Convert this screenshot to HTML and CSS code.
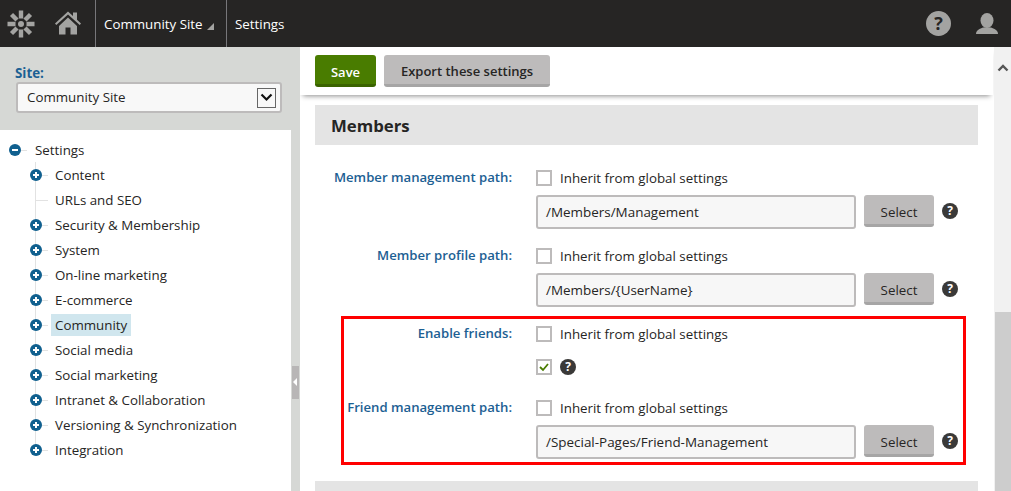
FILE: index.html
```html
<!DOCTYPE html>
<html lang="en">
<head>
    <meta charset="UTF-8">
    <title>Settings</title>
    <link rel="stylesheet" href="styles.css">
</head>
<body>
    <header class="topbar">
        <a class="logo">
            <svg width="28" height="28" viewBox="0 0 28 28">
                <g stroke="#a3a3a1" stroke-width="4.400">
                    <path d="M14 0.500v8M14 19.500v8M0.500 14h8M19.500 14h8M4.500 4.500l5.500 5.500M18 18l5.500 5.500M23.500 4.500L18 10M10 18l-5.500 5.500"/>
                </g>
                <circle cx="14" cy="14" r="3" fill="#a3a3a1"/>
            </svg>
        </a>
        <a class="home">
            <svg width="26" height="25" viewBox="0 0 26 25">
                <path d="M0 12.500L13 0.500l5 4.600V1.500h4v7.300l4 3.700-1.300 1.500L13 3.500 1.300 14z" fill="#a3a3a1"/>
                <path d="M4 15L13 6.500l9 8.500v8.500h-6.500v-7h-5v7H4z" fill="#a3a3a1"/>
            </svg>
        </a>
        <div class="crumb">Community Site <span class="crumb-arrow"></span></div>
        <div class="crumb crumb-last">Settings</div>
        <div class="topbar-right">
            <span class="top-help">?</span>
            <svg width="24" height="24" viewBox="0 0 24 24">
                <ellipse cx="12" cy="8.500" rx="6.500" ry="7.500" fill="#a3a3a1"/>
                <path d="M1 22c0-4 4-5.500 7-6.500h8c3 1 7 2.500 7 6.500z" fill="#a3a3a1"/>
            </svg>
        </div>
    </header>

    <div class="layout">
        <aside class="sidebar">
            <div class="site-box">
                <div class="site-label">Site:</div>
                <div class="site-select">
                    <span class="site-value">Community Site</span>
                    <span class="select-arrow">
                        <svg width="13" height="9" viewBox="0 0 13 9"><path d="M1.500 1.500l5 5 5-5" fill="none" stroke="#111" stroke-width="2.200"/></svg>
                    </span>
                </div>
            </div>
            <ul class="tree">
                <li class="tree-root"><span class="node minus"></span><span class="tree-text">Settings</span></li>
                <li class="tree-children">
                    <ul>
                        <li><span class="node plus"></span><span class="tree-text">Content</span></li>
                        <li><span class="node none"></span><span class="tree-text">URLs and SEO</span></li>
                        <li><span class="node plus"></span><span class="tree-text">Security &amp; Membership</span></li>
                        <li><span class="node plus"></span><span class="tree-text">System</span></li>
                        <li><span class="node plus"></span><span class="tree-text">On-line marketing</span></li>
                        <li><span class="node plus"></span><span class="tree-text">E-commerce</span></li>
                        <li><span class="node plus"></span><span class="tree-text selected">Community</span></li>
                        <li><span class="node plus"></span><span class="tree-text">Social media</span></li>
                        <li><span class="node plus"></span><span class="tree-text">Social marketing</span></li>
                        <li><span class="node plus"></span><span class="tree-text">Intranet &amp; Collaboration</span></li>
                        <li><span class="node plus"></span><span class="tree-text">Versioning &amp; Synchronization</span></li>
                        <li><span class="node plus"></span><span class="tree-text">Integration</span></li>
                    </ul>
                </li>
            </ul>
        </aside>

        <div class="splitter"><span class="splitter-handle"></span></div>

        <main class="main">
            <div class="toolbar">
                <button class="btn btn-save">Save</button>
                <button class="btn btn-export">Export these settings</button>
            </div>
            <div class="content">
                <h2 class="section-head">Members</h2>

                <div class="fields">
                    <div class="field-label">Member management path:</div>
                    <div class="field-body">
                        <label class="inherit"><span class="check"></span>Inherit from global settings</label>
                        <div class="path-row">
                            <div class="path-input">/Members/Management</div>
                            <button class="btn btn-select">Select</button>
                            <span class="help">?</span>
                        </div>
                    </div>

                    <div class="field-label">Member profile path:</div>
                    <div class="field-body">
                        <label class="inherit"><span class="check"></span>Inherit from global settings</label>
                        <div class="path-row">
                            <div class="path-input">/Members/{UserName}</div>
                            <button class="btn btn-select">Select</button>
                            <span class="help">?</span>
                        </div>
                    </div>

                    <div class="field-label">Enable friends:</div>
                    <div class="field-body field-body-check">
                        <label class="inherit"><span class="check"></span>Inherit from global settings</label>
                        <div class="value-row">
                            <span class="check">
                                <svg width="12" height="12" viewBox="0 0 12 12"><path d="M2 6l3 3 5-6" fill="none" stroke="#497c00" stroke-width="1.800"/></svg>
                            </span>
                            <span class="help">?</span>
                        </div>
                    </div>

                    <div class="field-label">Friend management path:</div>
                    <div class="field-body">
                        <label class="inherit"><span class="check"></span>Inherit from global settings</label>
                        <div class="path-row">
                            <div class="path-input">/Special-Pages/Friend-Management</div>
                            <button class="btn btn-select">Select</button>
                            <span class="help">?</span>
                        </div>
                    </div>
                </div>

                <div class="section-next"></div>

                <!-- red highlight from the docs screenshot -->
                <div class="highlight"></div>
            </div>
            <div class="scrollbar">
                <svg class="scroll-up" width="12" height="8" viewBox="0 0 12 8"><path d="M1.500 6.500L6 2l4.500 4.500" fill="none" stroke="#555" stroke-width="2.400"/></svg>
                <div class="scroll-thumb"></div>
            </div>
        </main>
    </div>
</body>
</html>
```

FILE: styles.css
```css
* {
    box-sizing: border-box;
}

html, body {
    height: 100%;
}

body {
    margin: 0;
    overflow: hidden;
    background-color: #ffffff;
    color: #262524;
    font-family: "Open Sans", "Liberation Sans", sans-serif;
    font-size: 13.33px;
}

/* top bar */
.topbar {
    display: flex;
    align-items: stretch;
    height: 47px;
    background-color: #262524;
    color: #ffffff;
}

.logo {
    display: flex;
    align-items: center;
    width: 42px;
    padding-left: 7px;
}

.home {
    display: flex;
    align-items: center;
    width: 54px;
    padding-left: 13px;
    border-right: 1px solid #77777a;
}

.crumb {
    display: flex;
    align-items: center;
    width: 131px;
    padding-left: 8px;
    border-right: 1px solid #77777a;
    white-space: pre;
}

.crumb-last {
    width: auto;
    border-right: none;
}

.crumb-arrow {
    width: 0;
    height: 0;
    margin: 5px 0 0 1px;
    border-left: 7px solid transparent;
    border-bottom: 7px solid #a3a3a1;
}

.topbar-right {
    display: flex;
    align-items: center;
    gap: 24px;
    margin-left: auto;
    padding-right: 12px;
}

.top-help {
    width: 25px;
    height: 25px;
    border-radius: 50%;
    background-color: #a3a3a1;
    color: #262524;
    font-size: 18px;
    font-weight: 700;
    line-height: 25px;
    text-align: center;
}

/* page columns */
.layout {
    display: flex;
    height: 444px;
}

.sidebar {
    width: 291px;
    flex: none;
}

.site-box {
    height: 83px;
    padding: 18px 9px 0 15px;
    background-color: #d6d8d5;
}

.site-label {
    height: 17px;
    color: #1c6093;
    font-weight: 700;
    line-height: 17px;
}

.site-select {
    display: flex;
    align-items: center;
    justify-content: space-between;
    height: 31px;
    margin-left: 1px;
    padding: 0 4px 0 9px;
    border: 2px solid #bdbbbb;
    border-radius: 3px;
    background-color: #f8f8f8;
}

.site-value {
    padding-bottom: 2px;
}

.select-arrow {
    display: flex;
    align-items: center;
    justify-content: center;
    width: 19px;
    height: 20px;
    border: 1px solid #666666;
}

/* tree */
.tree, .tree ul {
    margin: 0;
    padding: 0;
    list-style: none;
}

.tree {
    padding-top: 7px;
}

.tree li {
    position: relative;
    display: flex;
    align-items: center;
    height: 25px;
}

.tree-root {
    padding-left: 9px;
}

.tree .tree-children {
    display: block;
    height: auto;
    padding-left: 35px;
}

/* line stops at the last node */
.tree-children ul {
    height: 288px;
    border-left: 1px solid #e2e2e2;
}

.tree-children ul li {
    margin-left: -6px;
}

.node {
    position: relative;
    flex: none;
    width: 12px;
    height: 12px;
    margin-right: 9px;
    border-radius: 50%;
    background-color: #10608f;
}

.tree-root .node {
    margin-right: 10px;
}

/* connector between the node and the label */
.node::after {
    content: "";
    position: absolute;
    top: 6px;
    left: 12px;
    width: 6px;
    height: 1px;
    background-color: #e2e2e2;
}

.node.none {
    background-color: transparent;
}

.node.none::after {
    left: 6px;
    width: 12px;
}

.minus::before, .plus::before {
    content: "";
    position: absolute;
    top: 5px;
    left: 3px;
    width: 6px;
    height: 2px;
    background-color: #ffffff;
}

.plus {
    background-image: linear-gradient(#ffffff, #ffffff);
    background-size: 2px 6px;
    background-position: center;
    background-repeat: no-repeat;
}

.tree-text {
    padding: 2px 4px;
    white-space: nowrap;
}

.selected {
    background-color: #d0e6ee;
}

.splitter {
    position: relative;
    flex: none;
    width: 9px;
    background-color: #d6d8d5;
}

.splitter-handle {
    position: absolute;
    top: 319px;
    left: 1px;
    width: 7px;
    height: 33px;
    background-color: #b8b6b6;
}

.splitter-handle::before {
    content: "";
    position: absolute;
    top: 12px;
    left: 1px;
    border-top: 4px solid transparent;
    border-bottom: 4px solid transparent;
    border-right: 4px solid #ffffff;
}

/* main column */
.main {
    position: relative;
    flex: 1;
    overflow: hidden;
}

.toolbar {
    position: relative;
    display: flex;
    gap: 8px;
    width: 693px;
    height: 48px;
    padding: 8px 0 0 15px;
    box-shadow: 0 4px 5px -3px rgba(0, 0, 0, 0.45);
    background-color: #ffffff;
}

.btn {
    height: 32px;
    padding: 2px 0 0;
    border: none;
    border-bottom: 3px solid #a6a5a5;
    border-radius: 3px;
    background-color: #bdbbbb;
    color: #262524;
    font-family: inherit;
    font-size: 13px;
}

.btn-save {
    width: 61px;
    padding-top: 4px;
    border-bottom-color: #3a6300;
    background-color: #497c00;
    color: #ffffff;
    font-weight: 600;
}

.btn-export {
    width: 166px;
    font-weight: 600;
}

.content {
    position: relative;
    width: 678px;
    padding: 10px 0 0 15px;
}

.section-head {
    height: 40px;
    margin: 0;
    padding-left: 16px;
    background-color: #e4e4e4;
    font-size: 16.8px;
    font-weight: 700;
    line-height: 42px;
}

.fields {
    display: grid;
    grid-template-columns: 197px 1fr;
    column-gap: 24px;
    row-gap: 19px;
    margin-top: 25px;
}

.field-label {
    margin-top: -1px;
    color: #1c6093;
    font-size: 13.15px;
    font-weight: 600;
    line-height: 16px;
    text-align: right;
}

.field-body {
    display: flex;
    flex-direction: column;
    gap: 9px;
}

.field-body-check {
    gap: 17px;
    margin-bottom: 6px;
}

.inherit {
    display: flex;
    align-items: center;
    gap: 8px;
    height: 16px;
}

.check {
    display: flex;
    align-items: center;
    justify-content: center;
    flex: none;
    width: 16px;
    height: 16px;
    border: 2px solid #bdbbbb;
    background-color: #ffffff;
}

.path-row {
    display: flex;
    align-items: flex-start;
}

.value-row {
    display: flex;
    align-items: center;
    gap: 8px;
}

.path-input {
    width: 320px;
    height: 34px;
    padding-left: 8px;
    border: 2px solid #bdbbbb;
    border-radius: 3px;
    background-color: #f7f7f7;
    font-size: 13.45px;
    line-height: 31px;
}

.btn-select {
    width: 70px;
    height: 32px;
    margin: 0 8px;
    padding-top: 4px;
    font-size: 13.33px;
}

.help {
    flex: none;
    width: 16px;
    height: 16px;
    border-radius: 50%;
    background-color: #3a3938;
    color: #ffffff;
    font-size: 12px;
    font-weight: 700;
    line-height: 16px;
    text-align: center;
}

.path-row .help {
    margin-top: 8px;
}

.section-next {
    height: 40px;
    margin-top: 22px;
    background-color: #e4e4e4;
}

.highlight {
    position: absolute;
    top: 221px;
    left: 41px;
    width: 625px;
    height: 149px;
    border: 3px solid #ff0000;
    pointer-events: none;
}

/* scrollbar */
.scrollbar {
    position: absolute;
    top: 0;
    right: 0;
    bottom: 0;
    width: 17px;
    background-color: #f1f1f1;
}

.scroll-up {
    display: block;
    margin: 17px auto 0;
}

.scroll-thumb {
    position: absolute;
    top: 265px;
    left: 1px;
    right: 0;
    bottom: 0;
    background-color: #cdcdcd;
}
```
